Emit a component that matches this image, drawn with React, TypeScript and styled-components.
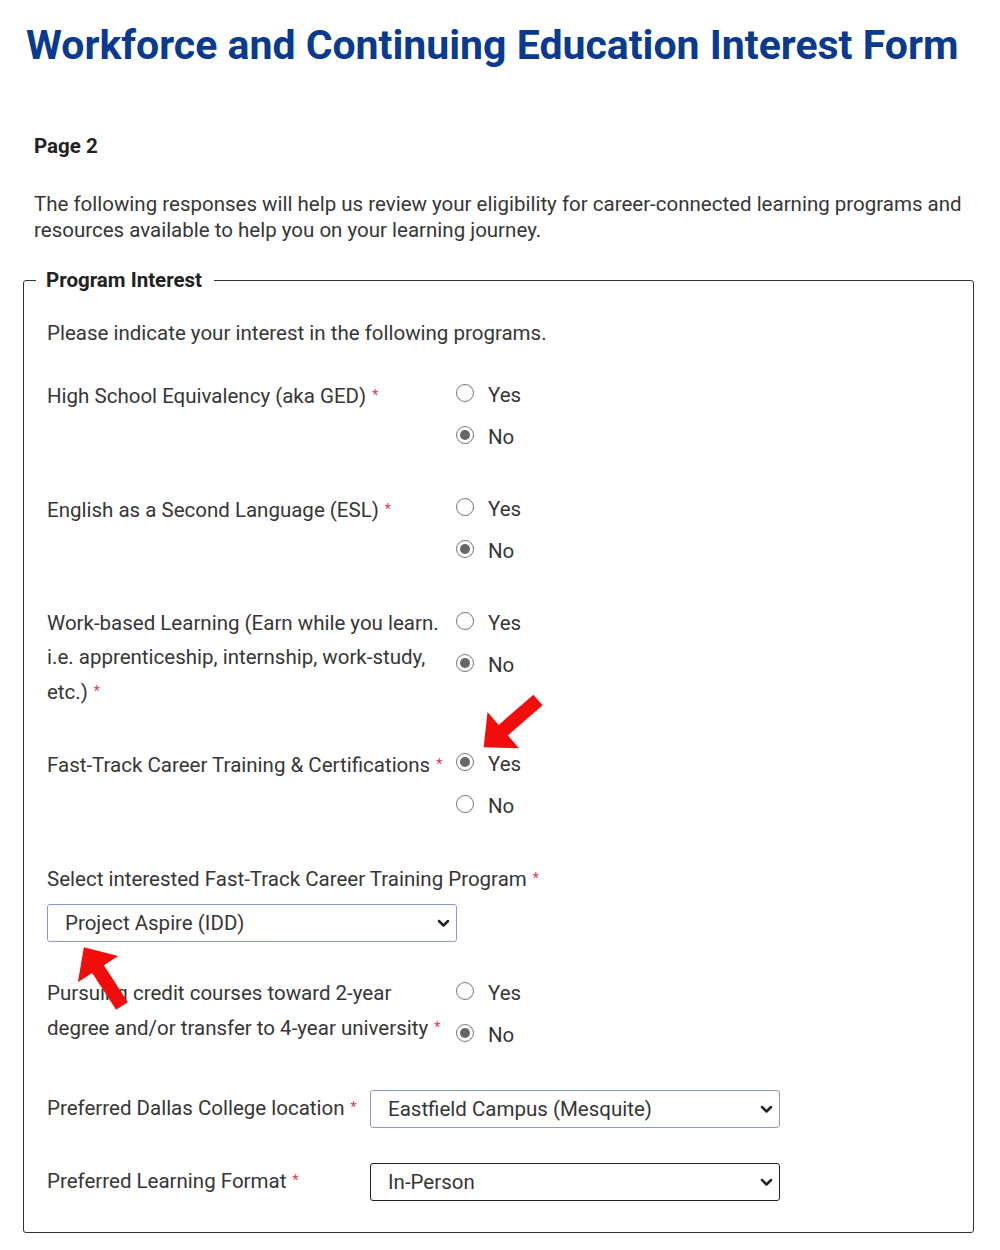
import React from "react";
import styled, { createGlobalStyle } from "styled-components";

const GlobalStyle = createGlobalStyle`
  body {
    margin: 0;
    background: #fff;
    font-family: Roboto, "Liberation Sans", Arial, sans-serif;
    color: #363636;
  }
`;

const Page = styled.div`
  position: relative;
  width: 1000px;
  box-sizing: border-box;
  padding: 20px 26px 16px 23px;
`;

const Title = styled.h1`
  margin: 0 0 0 3px;
  font-size: 41px;
  line-height: 50px;
  font-weight: 700;
  color: #093a8e;
`;

const PageLabel = styled.div`
  margin: 63px 0 0 11px;
  font-size: 20.5px;
  line-height: 26px;
  font-weight: 700;
  color: #222;
`;

const Intro = styled.p`
  margin: 32px 0 0 11px;
  font-size: 20.5px;
  line-height: 26px;
`;

const Fieldset = styled.fieldset`
  margin: 24px 0 0;
  padding: 23px 24px 31px 23px;
  border: 1.5px solid #333;
  border-radius: 3px;
  min-width: 0;
`;

const Legend = styled.legend`
  margin-left: -11px;
  padding: 0 12px 0 10px;
  font-size: 20.5px;
  line-height: 26px;
  font-weight: 700;
  color: #222;
`;

const Note = styled.div`
  font-size: 20.5px;
  line-height: 34px;
`;

const Row = styled.div<{ $mt?: number; $labelWidth?: number }>`
  display: grid;
  grid-template-columns: ${(p) => p.$labelWidth ?? 409}px 1fr;
  align-items: start;
  margin-top: ${(p) => p.$mt ?? 38}px;
`;

const Label = styled.div`
  font-size: 20.5px;
  line-height: 34px;
`;

const Required = styled.span`
  color: #e2364f;
  font-size: 14px;
  margin-left: 6px;
  vertical-align: 3px;
`;

const Options = styled.div`
  display: flex;
  flex-direction: column;
  gap: 8px;
`;

const Option = styled.label`
  display: flex;
  align-items: center;
  gap: 14px;
  font-size: 20.5px;
  line-height: 34px;
`;

const RadioDot = styled.span<{ $checked?: boolean }>`
  position: relative;
  width: 18px;
  height: 18px;
  box-sizing: border-box;
  border-radius: 50%;
  border: 1.5px solid #777;
  background: #fff;
  margin-top: -4px;

  &::after {
    content: "";
    display: ${(p) => (p.$checked ? "block" : "none")};
    position: absolute;
    inset: 3px;
    border-radius: 50%;
    background: #666;
  }
`;

const SelectBox = styled.div<{ $dark?: boolean }>`
  position: relative;
  width: 410px;
  height: 38px;
  box-sizing: border-box;
  border: ${(p) => (p.$dark ? "1.5px solid #222" : "1px solid #8b9bc6")};
  border-radius: 3px;
  background: #fff;
`;

const NativeSelect = styled.select`
  appearance: none;
  width: 100%;
  height: 100%;
  border: none;
  background: transparent;
  padding: 0 40px 0 17px;
  font-family: Roboto, "Liberation Sans", Arial, sans-serif;
  font-size: 20.5px;
  color: #363636;
  outline: none;
`;

const Chevron = styled.svg`
  position: absolute;
  right: 6px;
  top: 50%;
  width: 13px;
  height: 9px;
  margin-top: -4px;
  pointer-events: none;
`;

const Overlay = styled.svg`
  position: absolute;
  left: 0;
  top: 0;
  pointer-events: none;
`;

const SelectField = ({ value, dark }: { value: string; dark?: boolean }) => (
  <SelectBox $dark={dark}>
    <NativeSelect defaultValue={value}>
      <option>{value}</option>
    </NativeSelect>
    <Chevron viewBox="0 0 13 9">
      <path d="M2 2l4.5 4.5 4.5-4.5" fill="none" stroke="#222" strokeWidth="2.5" strokeLinecap="round" strokeLinejoin="round" />
    </Chevron>
  </SelectBox>
);

const Radios = ({ yes }: { yes: boolean }) => (
  <Options>
    <Option>
      <RadioDot $checked={yes} />
      Yes
    </Option>
    <Option>
      <RadioDot $checked={!yes} />
      No
    </Option>
  </Options>
);

const Arrow = ({ x, y, angle, length }: { x: number; y: number; angle: number; length: number }) => {
  const h = 26;
  const s = 7;
  const w = 24;
  const b = length - h;
  return (
    <polygon
      transform={`translate(${x} ${y}) rotate(${angle})`}
      points={`0,${-s} ${b},${-s} ${b},${-w} ${length},0 ${b},${w} ${b},${s} 0,${s}`}
      fill="#f20d0d"
    />
  );
};

export default function App() {
  return (
    <>
      <GlobalStyle />
      <Page>
        <Title>Workforce and Continuing Education Interest Form</Title>
        <PageLabel>Page 2</PageLabel>
        <Intro>
          The following responses will help us review your eligibility for career-connected learning programs and
          resources available to help you on your learning journey.
        </Intro>
        <Fieldset>
          <Legend>Program Interest</Legend>
          <Note>Please indicate your interest in the following programs.</Note>

          <Row $mt={28}>
            <Label>
              High School Equivalency (aka GED)<Required>*</Required>
            </Label>
            <Radios yes={false} />
          </Row>

          <Row>
            <Label>
              English as a Second Language (ESL)<Required>*</Required>
            </Label>
            <Radios yes={false} />
          </Row>

          <Row>
            <Label>
              Work-based Learning (Earn while you learn.
              <br />
              i.e. apprenticeship, internship, work-study,
              <br />
              etc.)<Required>*</Required>
            </Label>
            <Radios yes={false} />
          </Row>

          <Row $mt={38}>
            <Label>
              Fast-Track Career Training &amp; Certifications<Required>*</Required>
            </Label>
            <Radios yes={true} />
          </Row>

          <Row $mt={38} $labelWidth={900}>
            <Label>
              Select interested Fast-Track Career Training Program<Required>*</Required>
            </Label>
          </Row>
          <Row $mt={8} $labelWidth={410}>
            <SelectField value="Project Aspire (IDD)" />
          </Row>

          <Row $mt={34}>
            <Label>
              Pursuing credit courses toward 2-year
              <br />
              degree and/or transfer to 4-year university<Required>*</Required>
            </Label>
            <Radios yes={false} />
          </Row>

          <Row $mt={38} $labelWidth={323}>
            <Label>
              Preferred Dallas College location<Required>*</Required>
            </Label>
            <SelectField value="Eastfield Campus (Mesquite)" />
          </Row>

          <Row $mt={35} $labelWidth={323}>
            <Label>
              Preferred Learning Format<Required>*</Required>
            </Label>
            <SelectField value="In-Person" dark />
          </Row>
        </Fieldset>

        <Overlay width="1000" height="1250" viewBox="0 0 1000 1250">
          <Arrow x={538} y={700} angle={139} length={72} />
          <Arrow x={122} y={1006} angle={-123} length={70} />
        </Overlay>
      </Page>
    </>
  );
}
